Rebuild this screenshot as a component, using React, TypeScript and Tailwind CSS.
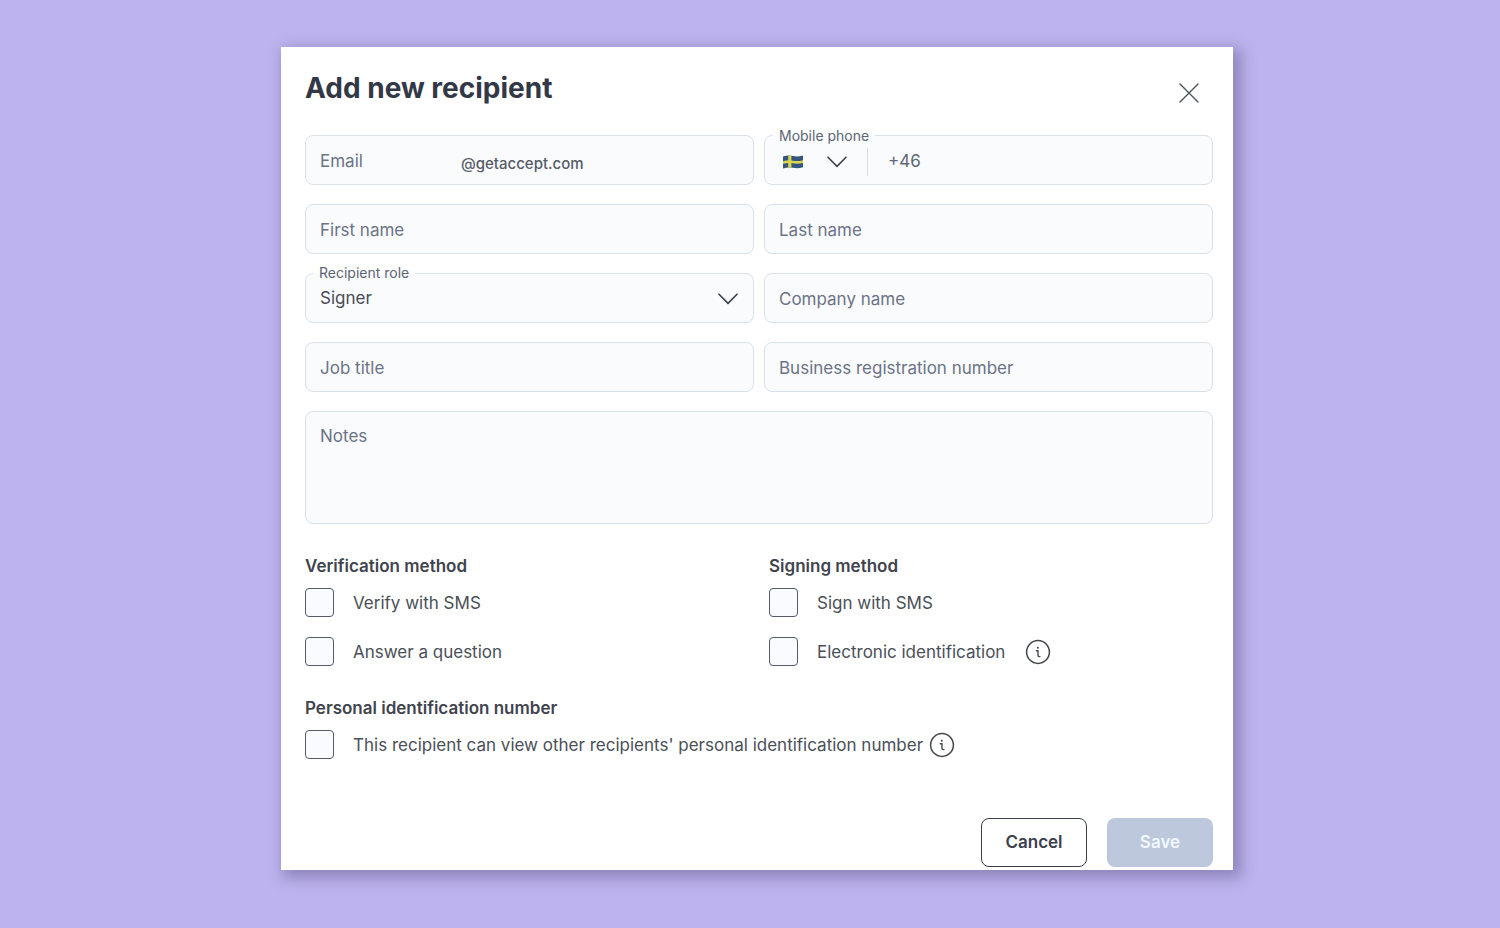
import { ReactNode } from "react";

const fieldClass =
  "h-[50px] w-full rounded-lg border border-[#d9e1e8] bg-[#fafbfd] px-3.5 pt-0.5 text-[17px] text-[#474c57] placeholder:text-[#6b7385] placeholder:opacity-100";

function ChevronIcon({ className = "" }: { className?: string }) {
  return (
    <svg
      width="20"
      height="12"
      viewBox="0 0 20 12"
      fill="none"
      stroke="#3c424e"
      strokeWidth="1.6"
      strokeLinecap="round"
      strokeLinejoin="round"
      className={className}
      aria-hidden="true"
    >
      <path d="M1 1.2 L10 10.4 L19 1.2" />
    </svg>
  );
}

function InfoIcon() {
  return (
    <svg width="26" height="26" viewBox="0 0 26 26" fill="none" stroke="#42474f" strokeWidth="1.5" aria-hidden="true">
      <circle cx="13" cy="13" r="11.4" />
      <circle cx="12.8" cy="8.7" r="1" fill="#42474f" stroke="none" />
      <path d="M11.3 11.8 H13 V16.3 Q13 17.6 14.2 17.6 H15" strokeWidth="1.4" strokeLinecap="round" strokeLinejoin="round" />
    </svg>
  );
}

function SwedishFlag() {
  return (
    <svg width="20" height="16" viewBox="0 0 20 16" aria-hidden="true">
      <path d="M0 2.4 Q5 0.8 10 2 T20 1.4 V13.2 Q15 14.8 10 13.8 T0 14.4 Z" fill="#33557f" />
      <path d="M5.2 1.6 L8.4 1.8 V13.7 L5.2 13.8 Z" fill="#dcd34f" />
      <path d="M0 7.2 Q5 5.8 10 6.7 T20 6.2 V8.9 Q15 10.2 10 9.3 T0 9.8 Z" fill="#dcd34f" />
    </svg>
  );
}

function FloatingLabel({ htmlFor, children }: { htmlFor: string; children: ReactNode }) {
  return (
    <label
      htmlFor={htmlFor}
      className="absolute -top-2.5 left-2 bg-linear-to-b from-white from-50% to-[#fafbfd] to-50% px-1.5 text-sm leading-5 text-[#5d6474]"
    >
      {children}
    </label>
  );
}

function TextField({ id, label }: { id: string; label: string }) {
  return <input id={id} type="text" aria-label={label} placeholder={label} className={fieldClass} />;
}

function CheckRow({ id, label }: { id: string; label: string }) {
  return (
    <div className="flex items-center gap-[19px]">
      <input
        id={id}
        type="checkbox"
        className="size-[29px] shrink-0 appearance-none rounded border border-[#555b68] bg-[#f9fbff] checked:bg-[#555b68]"
      />
      <label htmlFor={id} className="text-[17px] leading-6 text-[#4a4f58]">
        {label}
      </label>
    </div>
  );
}

function InfoButton({ label }: { label: string }) {
  return (
    <button type="button" aria-label={label}>
      <InfoIcon />
    </button>
  );
}

function SectionTitle({ children }: { children: ReactNode }) {
  return <h2 className="mb-2.5 text-[17px] leading-6 font-semibold text-[#3f444e]">{children}</h2>;
}

export default function App() {
  return (
    <main className="min-h-screen bg-[#bdb3ee] pt-[47px] pb-[58px] pl-3.5 font-['Inter',sans-serif]">
      <form className="mx-auto max-w-[952px] bg-white pt-6 pr-5 pb-[3px] pl-6 shadow-[5px_5px_14px_3px_rgba(60,50,100,0.36)]">
        <header className="flex items-start justify-between">
          <h1 className="text-[28px] leading-[34px] font-bold text-[#323846]">Add new recipient</h1>
          <button type="button" aria-label="Close" className="mt-3 mr-3.5">
            <svg width="20" height="20" viewBox="0 0 20 20" stroke="#4b5560" strokeWidth="1.4" strokeLinecap="round">
              <path d="M1 1 L19 19 M19 1 L1 19" />
            </svg>
          </button>
        </header>

        <div className="mt-[30px] grid grid-cols-2 gap-x-2.5 gap-y-[19px]">
          <div className="flex h-[50px] items-center rounded-lg border border-[#d9e1e8] bg-[#fafbfd] px-3.5 pt-1">
            <label htmlFor="email" className="w-[141px] text-[17px] text-[#6b7385]">
              Email
            </label>
            <input
              id="email"
              type="text"
              defaultValue="@getaccept.com"
              className="min-w-0 flex-1 pt-1 text-[15px] font-medium text-[#555b69]"
            />
          </div>

          <div className="relative flex h-[50px] items-center rounded-lg border border-[#d9e1e8] bg-[#fafbfd] pt-1 pl-[18px]">
            <FloatingLabel htmlFor="phone">Mobile phone</FloatingLabel>
            <button type="button" aria-label="Country code" className="flex items-center gap-6">
              <SwedishFlag />
              <ChevronIcon />
            </button>
            <span className="ml-5 h-7 w-px bg-[#d5dbe3]" />
            <input
              id="phone"
              type="tel"
              defaultValue="+46"
              className="ml-5 min-w-0 flex-1 text-[17px] text-[#5f6676]"
            />
          </div>

          <TextField id="first-name" label="First name" />
          <TextField id="last-name" label="Last name" />

          <div className="relative">
            <FloatingLabel htmlFor="role">Recipient role</FloatingLabel>
            <select id="role" className={`${fieldClass} appearance-none`}>
              <option>Signer</option>
            </select>
            <ChevronIcon className="pointer-events-none absolute top-5 right-4" />
          </div>
          <TextField id="company" label="Company name" />

          <TextField id="job-title" label="Job title" />
          <TextField id="business-number" label="Business registration number" />

          <textarea
            aria-label="Notes"
            placeholder="Notes"
            className="col-span-2 h-[113px] resize-none rounded-lg border border-[#d9e1e8] bg-[#fafbfd] px-3.5 py-3 text-[17px] leading-6 text-[#474c57] placeholder:text-[#6b7385] placeholder:opacity-100"
          />
        </div>

        <div className="mt-[30px] grid grid-cols-2 gap-x-5">
          <section>
            <SectionTitle>Verification method</SectionTitle>
            <div className="space-y-5">
              <CheckRow id="verify-sms" label="Verify with SMS" />
              <CheckRow id="answer-question" label="Answer a question" />
            </div>
          </section>
          <section>
            <SectionTitle>Signing method</SectionTitle>
            <div className="space-y-5">
              <CheckRow id="sign-sms" label="Sign with SMS" />
              <div className="flex items-center gap-5">
                <CheckRow id="electronic-id" label="Electronic identification" />
                <InfoButton label="About electronic identification" />
              </div>
            </div>
          </section>
        </div>

        <section className="mt-[30px]">
          <SectionTitle>Personal identification number</SectionTitle>
          <div className="flex items-center gap-1.5">
            <CheckRow id="view-personal" label="This recipient can view other recipients' personal identification number" />
            <InfoButton label="About personal identification numbers" />
          </div>
        </section>

        <footer className="mt-[59px] flex justify-end gap-5">
          <button
            type="button"
            className="h-[49px] w-[106px] rounded-lg border border-[#3b404c] bg-white text-[17px] font-semibold text-[#3b404c]"
          >
            Cancel
          </button>
          <button type="submit" className="h-[49px] w-[106px] rounded-lg bg-[#bdc8dd] text-[17px] font-semibold text-[#f3f8ff]">
            Save
          </button>
        </footer>
      </form>
    </main>
  );
}
